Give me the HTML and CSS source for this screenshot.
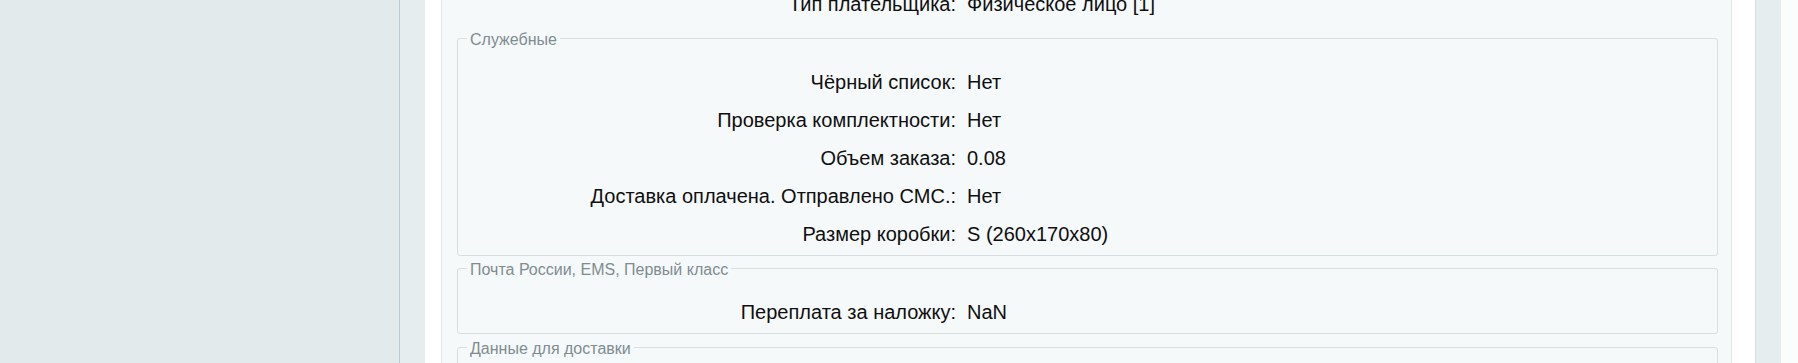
FILE: index.html
```html
<!DOCTYPE html>
<html lang="ru">
<head>
    <meta charset="UTF-8">
    <meta name="viewport" content="width=device-width, initial-scale=1.0">
    <title>Заказ</title>
    <link rel="stylesheet" href="styles.css">
</head>
<body>
    <div class="layout">
        <div class="sidebar"></div>
        <div class="frame">
            <div class="content">
                <div class="panel">
                    <div class="row outer-row">
                        <span class="label">Тип плательщика:</span>
                        <span class="value">Физическое лицо [1]</span>
                    </div>

                    <fieldset class="group group-service">
                        <legend>Служебные</legend>
                        <div class="row">
                            <span class="label">Чёрный список:</span>
                            <span class="value">Нет</span>
                        </div>
                        <div class="row">
                            <span class="label">Проверка комплектности:</span>
                            <span class="value">Нет</span>
                        </div>
                        <div class="row">
                            <span class="label">Объем заказа:</span>
                            <span class="value">0.08</span>
                        </div>
                        <div class="row">
                            <span class="label">Доставка оплачена. Отправлено СМС.:</span>
                            <span class="value">Нет</span>
                        </div>
                        <div class="row">
                            <span class="label">Размер коробки:</span>
                            <span class="value">S (260x170x80)</span>
                        </div>
                    </fieldset>

                    <fieldset class="group group-post">
                        <legend>Почта России, EMS, Первый класс</legend>
                        <div class="row">
                            <span class="label">Переплата за наложку:</span>
                            <span class="value">NaN</span>
                        </div>
                    </fieldset>

                    <fieldset class="group group-delivery">
                        <legend>Данные для доставки</legend>
                    </fieldset>
                </div>
            </div>
        </div>
    </div>
</body>
</html>
```

FILE: styles.css
```css
html, body {
    margin: 0;
    padding: 0;
    height: 100%;
    overflow: hidden;
}
body {
    font-family: 'Liberation Sans', Arial, sans-serif;
    color: #0f0f0f;
    background-color: #fbfdfd;
}
.layout {
    display: flex;
    height: 100%;
    background-color: #fbfdfd;
}
.sidebar {
    width: 399px;
    flex: none;
    background-color: #e2eaec;
}
.frame {
    box-sizing: border-box;
    width: 1382px;
    flex: none;
    padding: 0 25px 0 25px;
    background-color: #e6edef;
    border-left: 1px solid #b8ccd3;
}
.content {
    height: 100%;
    overflow: hidden;
    background-color: #ffffff;
    border-right: 1px solid #d4e0e4;
    padding: 0 23px 0 16px;
}
.panel {
    margin-top: -31px;
    padding: 15px 13px 0 15px;
    min-height: 460px;
    background-color: #f5f9fa;
    border: 1px solid #e1e8eb;
}

/* строки "название: значение" */
.row {
    display: grid;
    grid-template-columns: 489px 1fr;
    column-gap: 11px;
    height: 38px;
    line-height: 38px;
    font-size: 20px;
    white-space: nowrap;
}
.outer-row {
    grid-template-columns: 499px 1fr;
}
.label {
    text-align: right;
}

/* группы полей */
.group {
    margin: 1px 0 0 0;
    padding: 14px 9px 2px 9px;
    border: 1px solid #d6dfe2;
    border-radius: 3px;
    min-width: 0;
}
.group legend {
    padding: 4px 3px 0 3px;
    font-size: 16px;
    line-height: 18px;
    color: #808c91;
}
.group-service {
    margin-top: 4px;
}
.group-delivery {
    margin-top: 2px;
    min-height: 60px;
}
```
